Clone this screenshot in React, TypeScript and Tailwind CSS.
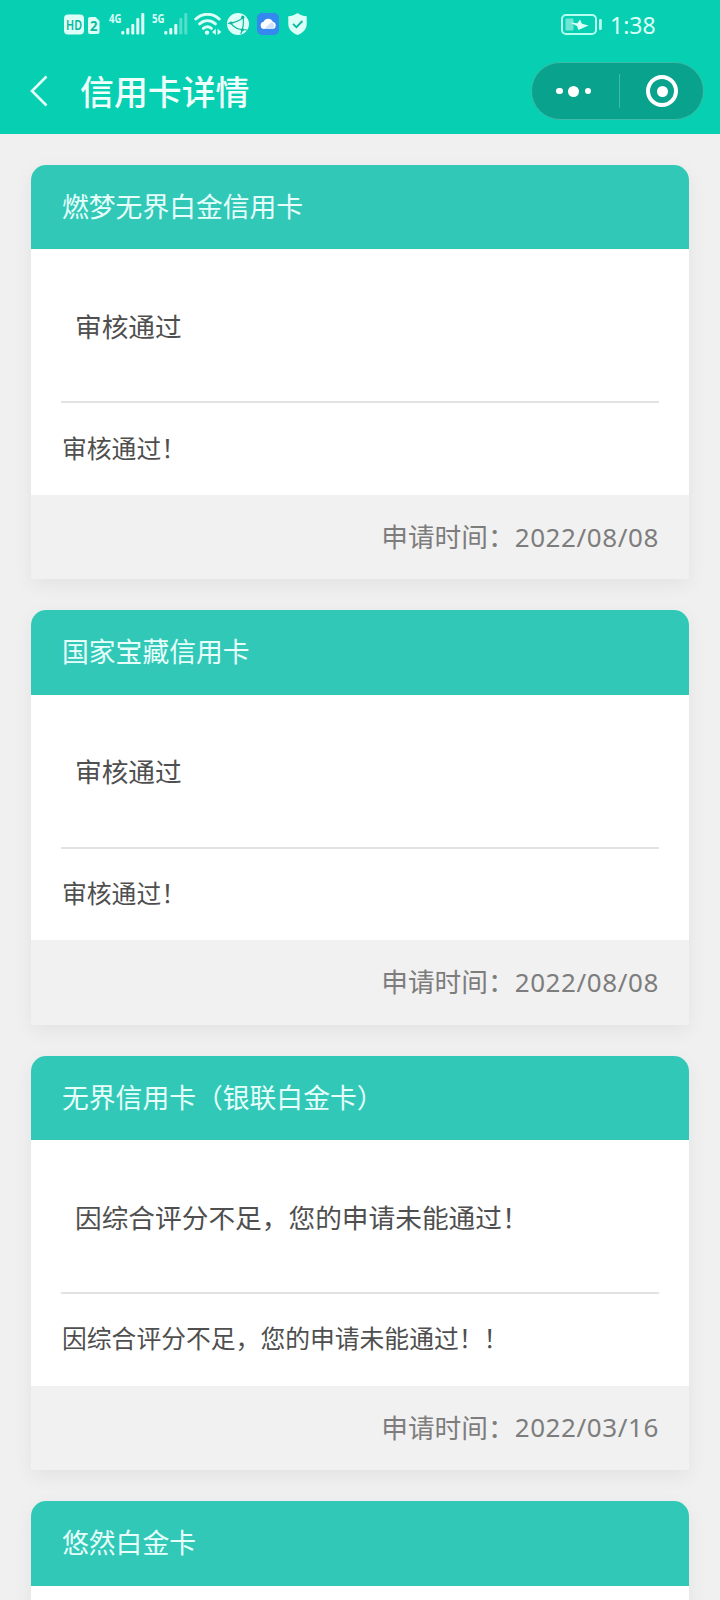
type CardRecord = {
  title: string;
  status?: string;
  detail?: string;
  date?: string;
};

const records: CardRecord[] = [
  { title: "燃梦无界白金信用卡", status: "审核通过", detail: "审核通过！", date: "2022/08/08" },
  { title: "国家宝藏信用卡", status: "审核通过", detail: "审核通过！", date: "2022/08/08" },
  {
    title: "无界信用卡（银联白金卡）",
    status: "因综合评分不足，您的申请未能通过！",
    detail: "因综合评分不足，您的申请未能通过！！",
    date: "2022/03/16",
  },
  { title: "悠然白金卡" },
];

function Signal({ label, active }: { label: string; active: number }) {
  const tops = [18, 15, 11, 5, 0];
  return (
    <svg className="overflow-visible" width="36" height="22" viewBox="0 0 36 22" fill="#dcfff8">
      <text x="0" y="10" fontSize="13" fontWeight="700" textLength="12.5" lengthAdjust="spacingAndGlyphs">
        {label}
      </text>
      {tops.map((top, i) => (
        <rect key={i} x={12.3 + i * 5} y={top} width="3" height={21.5 - top} rx="1" opacity={i < active ? 1 : 0.35} />
      ))}
    </svg>
  );
}

function StatusBar() {
  return (
    <div className="flex h-12 items-start justify-between px-16 pt-[13px] text-[#dcfff8]">
      <div className="flex">
        <svg className="overflow-visible" width="36" height="22" viewBox="0 0 36 22" fill="#dcfff8">
          <rect x="0" y="1.5" width="20" height="20" rx="4" />
          <text x="2" y="17" fontSize="14.5" fontWeight="600" fill="#07b89d" textLength="16" lengthAdjust="spacingAndGlyphs">
            HD
          </text>
          <path d="M26 4h5.500l4 4v11a2 2 0 0 1-2 2H26a2 2 0 0 1-2-2V6a2 2 0 0 1 2-2z" />
          <text x="26" y="18" fontSize="15" fontWeight="700" fill="#07b89d" textLength="7.5" lengthAdjust="spacingAndGlyphs">
            2
          </text>
        </svg>
        <div className="ml-[9px] flex gap-[7px]">
          <Signal label="4G" active={5} />
          <Signal label="5G" active={3} />
        </div>
        <svg className="ml-[6px]" width="28" height="22" viewBox="0 0 28 22" fill="none" stroke="#dcfff8" strokeWidth="3" strokeLinecap="round">
          <path d="M1.800 6C8.800-.2 18.200-.2 25.200 6" />
          <path d="M5.600 10.800c4.800-4 11-4 15.800 0" />
          <path d="M9.400 15.400c2.600-2 5.600-2 8 0" />
          <circle cx="13" cy="19.600" r="2.200" fill="#dcfff8" stroke="none" />
          <path d="M21.800 15.800v6.200l-3.800-3.100zM23.600 15.800v6.200l3.800-3.100z" fill="#dcfff8" stroke="none" />
        </svg>
        <svg className="ml-[5px]" width="22" height="22" viewBox="0 0 22 22">
          <circle cx="11" cy="11" r="11" fill="#dcfff8" />
          <g fill="none" stroke="#07b89d" strokeWidth="1.2">
            <path d="M16 4.400C13 8 9 9.500 0.800 10.500" />
            <path d="M3.500 9.500C6 14.500 11 17 20 17" />
            <path d="M15.800 3.500c1.200 5 .7 11-2 17.500" />
          </g>
          <g fill="#07b89d">
            <circle cx="15.800" cy="4.200" r="1.600" />
            <circle cx="4" cy="10" r="1.600" />
            <circle cx="15.300" cy="16.800" r="1.600" />
          </g>
        </svg>
        <svg className="ml-2" width="22" height="22" viewBox="0 0 22 22">
          <rect width="22" height="22" rx="5" fill="#3589ee" />
          <path d="M7 16a3.700 3.700 0 0 1-.4-7.300A5 5 0 0 1 15.800 8.800a3.700 3.700 0 0 1 .2 7.200z" fill="#fff" />
          <path d="M7 16l7-6.500a3.700 3.700 0 0 1 2 6.500z" fill="#cfe1fb" />
        </svg>
        <svg className="ml-[9px]" width="19" height="22" viewBox="0 0 19 22">
          <path d="M9.500 0c2.500 2 5.500 3 9.200 3.200V11c0 5.500-4 9-9.200 11C4.300 20 .3 16.500.3 11V3.200C4 3 7 2 9.500 0z" fill="#dcfff8" />
          <path d="M5 10.800l3.400 3.400 6-6.200" fill="none" stroke="#07b89d" strokeWidth="1.800" />
        </svg>
      </div>
      <div className="flex">
        <svg className="mt-px" width="42" height="21" viewBox="0 0 42 21">
          <rect x="1" y="1" width="34" height="19" rx="4" fill="none" stroke="#b4fff0" strokeWidth="2" />
          <rect x="4.500" y="4.500" width="8" height="12" rx="1" fill="#6fe5d3" />
          <path d="M9 8.500l7.500.8L19 5.500l2 4.200 6.500 1.800L17.500 16l-1.500-4z" fill="#dcfff8" />
          <rect x="38" y="5" width="2.800" height="11" rx="1.200" fill="#b4fff0" />
        </svg>
        <span className="ml-[7px] w-[46px] text-[23px] leading-[25px]">1:38</span>
      </div>
    </div>
  );
}

function NavBar() {
  return (
    <div className="flex h-[86px] items-center pl-[30px] pr-4">
      <svg width="18" height="32" viewBox="0 0 18 32" fill="none" stroke="#e6fffb" strokeWidth="2.6">
        <path d="M16.500 1.500L2 16l14.500 14.500" />
      </svg>
      <h1 className="ml-8 flex-1 pt-1 text-[33.900px] font-medium leading-none text-[#effffc]">信用卡详情</h1>
      <div className="flex h-[58px] w-[173px] items-center rounded-full border border-[#3bbba8] bg-[#09a38d]">
        <div className="flex flex-1 items-center justify-center gap-[5.500px] pr-[3px]">
          <span className="size-[6.500px] rounded-full bg-white" />
          <span className="size-[11px] rounded-full bg-white" />
          <span className="size-[6.500px] rounded-full bg-white" />
        </div>
        <div className="h-[34px] w-px bg-[#3bbba8]" />
        <div className="flex flex-1 justify-center">
          <div className="ml-[2px] flex size-8 items-center justify-center rounded-full border-4 border-white">
            <span className="size-[11px] rounded-full bg-white" />
          </div>
        </div>
      </div>
    </div>
  );
}

function RecordCard({ title, status, detail, date }: CardRecord) {
  return (
    <section className="overflow-hidden rounded-t-[15px] rounded-b-[4px] bg-white shadow-[0_6px_20px_rgba(0,0,0,0.06)]">
      <h2 className="flex h-[84.5px] items-center bg-[#32c8b7] px-[31px] text-[26.800px] text-[#e6fffb]">{title}</h2>
      {status ? (
        <div className="px-[30px]">
          <p className="flex h-[151.900px] items-center pl-[14px] pt-[3px] text-[26.700px]">{status}</p>
          <div className="h-[2px] bg-[#e2e2e2]" />
          <p className="flex h-[91.700px] items-center pb-[2px] pl-px text-[24.800px]">{detail}</p>
        </div>
      ) : (
        <div className="h-16" />
      )}
      {date && (
        <div className="flex h-[84.300px] items-center justify-end bg-[#f1f1f1] px-[30px] text-[26.700px] text-[#7d7d7d]">
          <span>申请时间：</span>
          <span className="text-[26px] tracking-[0.600px]">{date}</span>
        </div>
      )}
    </section>
  );
}

export default function App() {
  return (
    <div className="h-[1600px] w-[720px] overflow-hidden bg-[#f0f0f0] font-['Noto_Sans','Noto_Sans_CJK_SC',sans-serif] text-[#4f4f4f]" lang="zh-CN">
      <header className="bg-[#07cfb2]">
        <StatusBar />
        <NavBar />
      </header>
      <main className="flex flex-col gap-[31px] px-[31px] pt-[30.900px]">
        {records.map((record, i) => (
          <RecordCard key={i} {...record} />
        ))}
      </main>
    </div>
  );
}
